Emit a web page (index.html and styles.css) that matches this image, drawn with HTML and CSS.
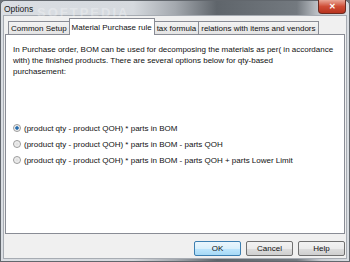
FILE: index.html
```html
<!DOCTYPE html>
<html lang="en">
<head>
    <meta charset="UTF-8">
    <title>Options</title>
    <link rel="stylesheet" href="styles.css">
</head>
<body>

    <div class="window">
        <div class="titlebar">
            <span class="title">Options</span>
            <span class="watermark">SOFTPEDIA</span>
            <div class="close-btn">&#x2715;</div>
        </div>

        <div class="client">
            <div class="tabs">
                <div class="tab">Common Setup</div>
                <div class="tab active">Material Purchase rule</div>
                <div class="tab">tax formula</div>
                <div class="tab">relations with items and vendors</div>
            </div>

            <div class="panel">
                <p class="intro">In Purchase order, BOM can be used for decomposing the materials as per( in accordance with) the finished products. There are several options below for qty-based<br>purchasement:</p>

                <div class="options">
                    <label>
                        <input type="radio" name="rule" checked>
                        (product qty - product QOH) * parts in BOM
                    </label>
                    <label>
                        <input type="radio" name="rule">
                        (product qty - product QOH) * parts in BOM - parts QOH
                    </label>
                    <label>
                        <input type="radio" name="rule">
                        (product qty - product QOH) * parts in BOM - parts QOH + parts Lower Limit
                    </label>
                </div>
            </div>

            <div class="buttons">
                <button class="default">OK</button>
                <button>Cancel</button>
                <button>Help</button>
            </div>
        </div>
    </div>

</body>
</html>
```

FILE: styles.css
```css
* {
    margin: 0;
    padding: 0;
    box-sizing: border-box;
}

body {
    width: 350px;
    height: 262px;
    overflow: hidden;
    font-family: 'Liberation Sans', Arial, sans-serif;
    font-size: 8px;
    color: #111;
    background: #6d7278;
}

.window {
    width: 350px;
    height: 262px;
    background: linear-gradient(90deg, #dadee3 0%, #d5d9de 38%, #a4a9af 50%, #5f656b 62%, #73797f 85%, #c9cdd2 92%, #d9dde2 100%);
    border: 1px solid #62676d;
    border-radius: 5px 5px 0 0;
    display: flex;
    flex-direction: column;
    padding: 0 2px 2px 2px;
}

.titlebar {
    height: 14px;
    display: flex;
    align-items: center;
    position: relative;
}

.title {
    font-size: 8.5px;
    color: #1b1b1b;
    margin: 1px 0 0 1px;
}

.watermark {
    position: absolute;
    left: 34px;
    top: 4px;
    font-size: 13px;
    font-weight: bold;
    letter-spacing: 2px;
    color: rgba(255, 255, 255, 0.3);
}

.close-btn {
    position: absolute;
    right: 1px;
    top: -1px;
    width: 28px;
    height: 14px;
    background: linear-gradient(#e9a898, #cf4d36 50%, #b8331e);
    border: 1px solid #6b2a20;
    border-top: none;
    border-radius: 0 0 4px 4px;
    color: #fff;
    font-size: 8px;
    font-weight: bold;
    display: flex;
    justify-content: center;
    align-items: center;
}

.client {
    flex: 1;
    background: #f0f0f0;
    border: 1px solid #a7acb3;
    padding: 2px 1px 0 1px;
    display: flex;
    flex-direction: column;
}

.tabs {
    display: flex;
    align-items: flex-end;
    padding-left: 3px;
    height: 16px;
    position: relative;
    z-index: 1;
}

.tab {
    height: 13px;
    padding: 0 2px;
    border: 1px solid #898c95;
    border-bottom: none;
    margin-right: -1px;
    background: linear-gradient(#f3f3f3, #e4e4e4);
    display: flex;
    align-items: center;
    white-space: nowrap;
}

.tab.active {
    height: 17px;
    background: #fff;
    margin-bottom: -1px;
}

.panel {
    height: 200px;
    background: #fff;
    border: 1px solid #898c95;
    padding: 9px 7px;
}

.intro {
    line-height: 11px;
}

.options {
    display: flex;
    flex-direction: column;
    gap: 4px;
    margin-top: 45px;
}

label {
    display: flex;
    align-items: center;
    height: 12px;
    white-space: nowrap;
}

input[type="radio"] {
    appearance: none;
    width: 8px;
    height: 8px;
    margin: 0 3px 0 0;
    border: 1px solid #9a9a9a;
    border-radius: 50%;
    background: radial-gradient(circle, #dcdcdc 0%, #f4f4f4 70%);
}

input[type="radio"]:checked {
    background: radial-gradient(circle, #1d5fa0 0%, #2f76b7 35%, #e4e4e4 45%, #f4f4f4 70%);
}

.buttons {
    display: flex;
    justify-content: flex-end;
    gap: 5px;
    padding-top: 7px;
}

button {
    width: 47px;
    height: 15px;
    font-family: inherit;
    font-size: 8px;
    color: #111;
    background: linear-gradient(#f2f2f2 0%, #ebebeb 50%, #dddddd 51%, #cfcfcf 100%);
    border: 1px solid #707070;
    border-radius: 2px;
}

button.default {
    border-color: #3c7fb1;
    background: linear-gradient(#eaf6fd 0%, #d9f0fc 50%, #bee6fd 51%, #a7d9f5 100%);
}
```
